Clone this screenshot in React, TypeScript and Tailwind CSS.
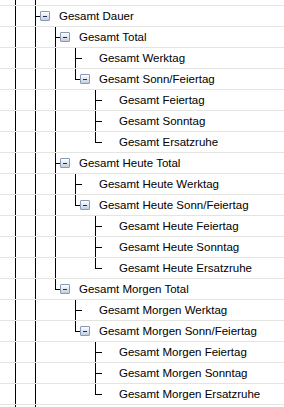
type TreeNode = { label: string; children?: TreeNode[] };

const leaves = (prefix: string): TreeNode[] => [
  { label: `${prefix} Feiertag` },
  { label: `${prefix} Sonntag` },
  { label: `${prefix} Ersatzruhe` },
];

const group = (prefix: string, title: string): TreeNode => ({
  label: title,
  children: [
    { label: `${prefix} Werktag` },
    { label: `${prefix} Sonn/Feiertag`, children: leaves(prefix) },
  ],
});

const tree: TreeNode = {
  label: 'Gesamt Dauer',
  children: [
    group('Gesamt', 'Gesamt Total'),
    group('Gesamt Heute', 'Gesamt Heute Total'),
    group('Gesamt Morgen', 'Gesamt Morgen Total'),
  ],
};

interface Row {
  label: string;
  guides: boolean[];
  isLast: boolean;
  hasChildren: boolean;
}

const flatten = (node: TreeNode, guides: boolean[], isLast: boolean, out: Row[]) => {
  out.push({ label: node.label, guides, isLast, hasChildren: !!node.children });
  node.children?.forEach((child, i) =>
    flatten(child, [...guides, !isLast], i === node.children!.length - 1, out)
  );
  return out;
};

const rows = flatten(tree, [true], false, []);

const Guide = ({ on }: { on: boolean }) => (
  <div className="w-[20px] shrink-0">
    {on && <div className="w-[16px] h-full border-r border-black" />}
  </div>
);

const ExpandBox = () => (
  <div className="w-[10px] h-[10px] border border-[#8a9ab4] rounded-[1px] bg-gradient-to-b from-white to-[#c2cee1] flex items-center justify-center">
    <span className="w-[4px] h-[1px] bg-[#1d2c49]" />
  </div>
);

const TreeRow = ({ row }: { row: Row }) => (
  <div className="flex h-[21px] border-b border-[#e4e4e0]">
    {row.guides.map((g, i) => (
      <Guide key={i} on={g} />
    ))}
    <svg width={20} height={20} className="shrink-0 overflow-visible" shapeRendering="crispEdges">
      <line x1={15.5} y1={0} x2={15.5} y2={row.isLast ? 11 : 20} stroke="black" />
      <line x1={15} y1={10.5} x2={row.hasChildren ? 20 : 22} y2={10.5} stroke="black" />
    </svg>
    <div className="w-[19px] shrink-0 pt-[5px]">{row.hasChildren && <ExpandBox />}</div>
    <span className="text-[11.5px] leading-[20px] text-black whitespace-nowrap">{row.label}</span>
  </div>
);

export default function App() {
  return (
    <div
      className="w-[284px] h-[407px] bg-white overflow-hidden"
      style={{ fontFamily: '"Liberation Sans", Arial, sans-serif' }}
    >
      <div className="flex h-[6px] border-b border-[#e4e4e0]">
        <Guide on />
        <Guide on />
      </div>
      {rows.map((row, i) => (
        <TreeRow key={i} row={row} />
      ))}
      <div className="flex h-[2px]">
        <Guide on />
        <Guide on />
      </div>
    </div>
  );
}
